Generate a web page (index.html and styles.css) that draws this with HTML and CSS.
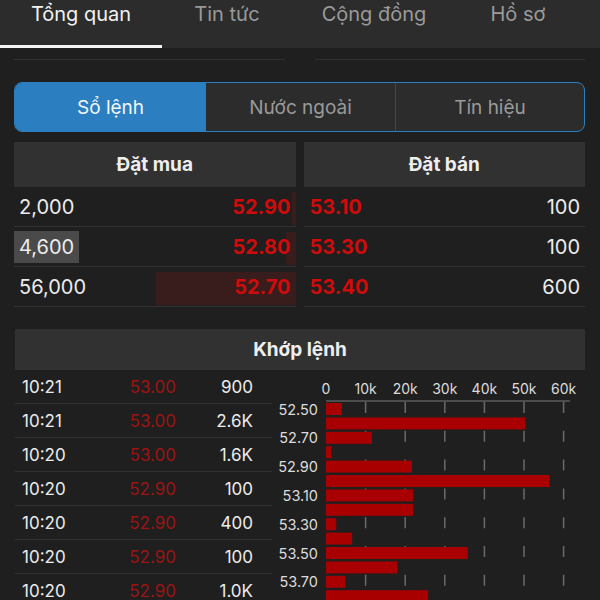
FILE: index.html
```html
<!DOCTYPE html>
<html lang="vi">
<head>
  <meta charset="UTF-8">
  <meta name="viewport" content="width=device-width, initial-scale=1.0">
  <title>Tổng quan</title>
  <link rel="stylesheet" href="styles.css">
</head>
<body>
  <!-- Tab trên cùng -->
  <nav class="tabs">
    <span class="tab active">Tổng quan</span>
    <span class="tab">Tin tức</span>
    <span class="tab">Cộng đồng</span>
    <span class="tab">Hồ sơ</span>
  </nav>

  <!-- phần đã cuộn -->
  <div class="scrolled">
    <div class="scrolled-line"></div>
    <div class="scrolled-line"></div>
  </div>

  <!-- Segmented -->
  <div class="segment">
    <span class="seg active">Sổ lệnh</span>
    <span class="seg">Nước ngoài</span>
    <span class="seg">Tín hiệu</span>
  </div>

  <!-- Sổ lệnh -->
  <div class="book">
    <div class="side">
      <div class="head">Đặt mua</div>
      <div class="row">
        <span class="depth" style="width: 4px"></span>
        <span class="qty">2,000</span><span class="price">52.90</span>
      </div>
      <div class="row">
        <span class="depth" style="width: 10px"></span>
        <span class="qty flash">4,600</span><span class="price">52.80</span>
      </div>
      <div class="row">
        <span class="depth" style="width: 140px"></span>
        <span class="qty">56,000</span><span class="price">52.70</span>
      </div>
    </div>
    <div class="side ask">
      <div class="head">Đặt bán</div>
      <div class="row"><span class="price">53.10</span><span class="qty">100</span></div>
      <div class="row"><span class="price">53.30</span><span class="qty">100</span></div>
      <div class="row"><span class="price">53.40</span><span class="qty">600</span></div>
    </div>
  </div>

  <!-- Khớp lệnh -->
  <div class="match">
    <div class="head">Khớp lệnh</div>
    <div class="match-body">
      <div class="trades">
        <div class="trade"><span>10:21</span><span class="tp">53.00</span><span class="tv">900</span></div>
        <div class="trade"><span>10:21</span><span class="tp">53.00</span><span class="tv">2.6K</span></div>
        <div class="trade"><span>10:20</span><span class="tp">53.00</span><span class="tv">1.6K</span></div>
        <div class="trade"><span>10:20</span><span class="tp">52.90</span><span class="tv">100</span></div>
        <div class="trade"><span>10:20</span><span class="tp">52.90</span><span class="tv">400</span></div>
        <div class="trade"><span>10:20</span><span class="tp">52.90</span><span class="tv">100</span></div>
        <div class="trade"><span>10:20</span><span class="tp">52.90</span><span class="tv">1.0K</span></div>
      </div>
      <svg class="chart" id="chart" width="328" height="230" viewBox="0 0 328 230"></svg>
    </div>
  </div>

  <script>
    // khối lượng theo giá (nghìn cp)
    const levels = [
      ['52.50', 4], ['52.60', 50.3], ['52.70', 11.6], ['52.80', 1.3],
      ['52.90', 21.7], ['53.00', 56.4], ['53.10', 22], ['53.20', 22],
      ['53.30', 2.6], ['53.40', 6.6], ['53.50', 35.8], ['53.60', 18],
      ['53.70', 4.9], ['53.80', 25.8]
    ];
    const svg = document.getElementById('chart');
    const NS = 'http://www.w3.org/2000/svg';
    const x0 = 54, perK = 3.96, barTop = 33, step = 14.4;

    function el(name, attrs, text) {
      const e = document.createElementNS(NS, name);
      for (const k in attrs) e.setAttribute(k, attrs[k]);
      if (text) e.textContent = text;
      svg.appendChild(e);
      return e;
    }

    // trục và lưới
    el('line', { x1: x0, y1: 31, x2: x0 + 244, y2: 31, class: 'axis' });
    for (let i = 0; i <= 6; i++) {
      const x = x0 + i * 10 * perK;
      el('text', { x: x, y: 24, class: 'tick' }, i === 0 ? '0' : i * 10 + 'k');
      if (i > 0) el('line', { x1: x, y1: 32, x2: x, y2: 230, class: 'grid' });
    }

    // thanh khối lượng
    levels.forEach(([price, vol], i) => {
      const y = barTop + i * step;
      el('rect', { x: x0, y: y, width: vol * perK, height: 12, class: 'bar' });
      if (i % 2 === 0) el('text', { x: 46, y: y + 11.5, class: 'ylabel' }, price);
    });
  </script>
</body>
</html>
```

FILE: styles.css
```css
:root {
  --bg:      #1f1f1f;
  --nav:     #2c2c2c;
  --head:    #313131;
  --line:    #323232;
  --blue:    #2b7fc0;
  --red:     #cf0b0b;
  --red-dim: #9c1414;
  --text:    #ececec;
  --muted:   #9a9a9a;
}
* { box-sizing: border-box; }
body {
  margin: 0;
  background: var(--bg);
  color: var(--text);
  font-family: Inter, "Noto Sans", sans-serif;
  overflow: hidden;
}
/* tabs */
.tabs {
  display: grid;
  grid-template-columns: 162px 130px 164px 124px;
  height: 48px;
  background: var(--nav);
}
.tab {
  text-align: center;
  font-size: 20px;
  line-height: 28px;
  color: var(--muted);
}
.tab.active {
  color: #f2f2f2;
  border-bottom: 3px solid #f4f4f4;
}
/* dòng đã cuộn */
.scrolled {
  display: grid;
  grid-template-columns: 272px 270px;
  gap: 30px;
  padding: 0 15px 0 13px;
  height: 12px;
}
.scrolled-line {
  border-bottom: 1px solid #303030;
}
/* segmented control */
.segment {
  display: grid;
  grid-template-columns: 191px 1fr 1fr;
  margin: 22px 15px 0 14px;
  height: 50px;
  border: 1.5px solid var(--blue);
  border-radius: 8px;
  overflow: hidden;
  background: var(--nav);
}
.seg {
  display: flex;
  align-items: center;
  justify-content: center;
  font-size: 19px;
  color: var(--muted);
  border-left: 1px solid #454545;
}
.seg:nth-child(2) { border-left: none; }
.seg.active {
  background: var(--blue);
  color: #f4f8fc;
  border-left: none;
}
/* sổ lệnh */
.book {
  display: grid;
  grid-template-columns: 1fr 1fr;
  gap: 8px;
  margin: 10px 15px 0 14px;
}
.head {
  height: 45px;
  display: flex;
  align-items: center;
  justify-content: center;
  background: var(--head);
  font-size: 19px;
  font-weight: 700;
  color: #eeeeee;
}
.row {
  position: relative;
  height: 40px;
  display: flex;
  align-items: center;
  justify-content: space-between;
  padding: 0 5px 0 5px;
  border-bottom: 1px solid var(--line);
  font-size: 20px;
}
.ask .row { padding: 0 5px 0 6px; }
.row .qty, .row .price { position: relative; }
.price {
  color: var(--red);
  font-weight: 700;
}
.depth {
  position: absolute;
  right: 0;
  top: 5px;
  bottom: 1px;
  background: rgba(150, 20, 20, 0.22);
}
.flash {
  background: #4a4a4a;
  margin-left: -5px;
  padding: 4px 5px;
}
/* khớp lệnh */
.match {
  margin: 22px 15px 0 15px;
}
.match .head {
  height: 41px;
}
.match-body {
  display: grid;
  grid-template-columns: 257px 1fr;
}
.trades {
  display: flex;
  flex-direction: column;
}
.trade {
  display: grid;
  grid-template-columns: 1fr 1fr 1fr;
  height: 34px;
  align-items: center;
  padding: 0 19px 0 7px;
  border-bottom: 1px solid var(--line);
  font-size: 17px;
}
.tp {
  color: var(--red-dim);
  text-align: right;
}
.tv { text-align: right; }
/* biểu đồ */
.chart {
  display: block;
  margin-right: -15px;
}
.chart .axis { stroke: #7a7a7a; stroke-width: 1; }
.chart .grid { stroke: #6a6a6a; stroke-width: 1.5; stroke-dasharray: 11 17.8; }
.chart .bar { fill: #a80000; }
.chart .tick {
  fill: #dcdcdc;
  font-size: 14px;
  text-anchor: middle;
}
.chart .ylabel {
  fill: #dcdcdc;
  font-size: 14.5px;
  text-anchor: end;
}
```
